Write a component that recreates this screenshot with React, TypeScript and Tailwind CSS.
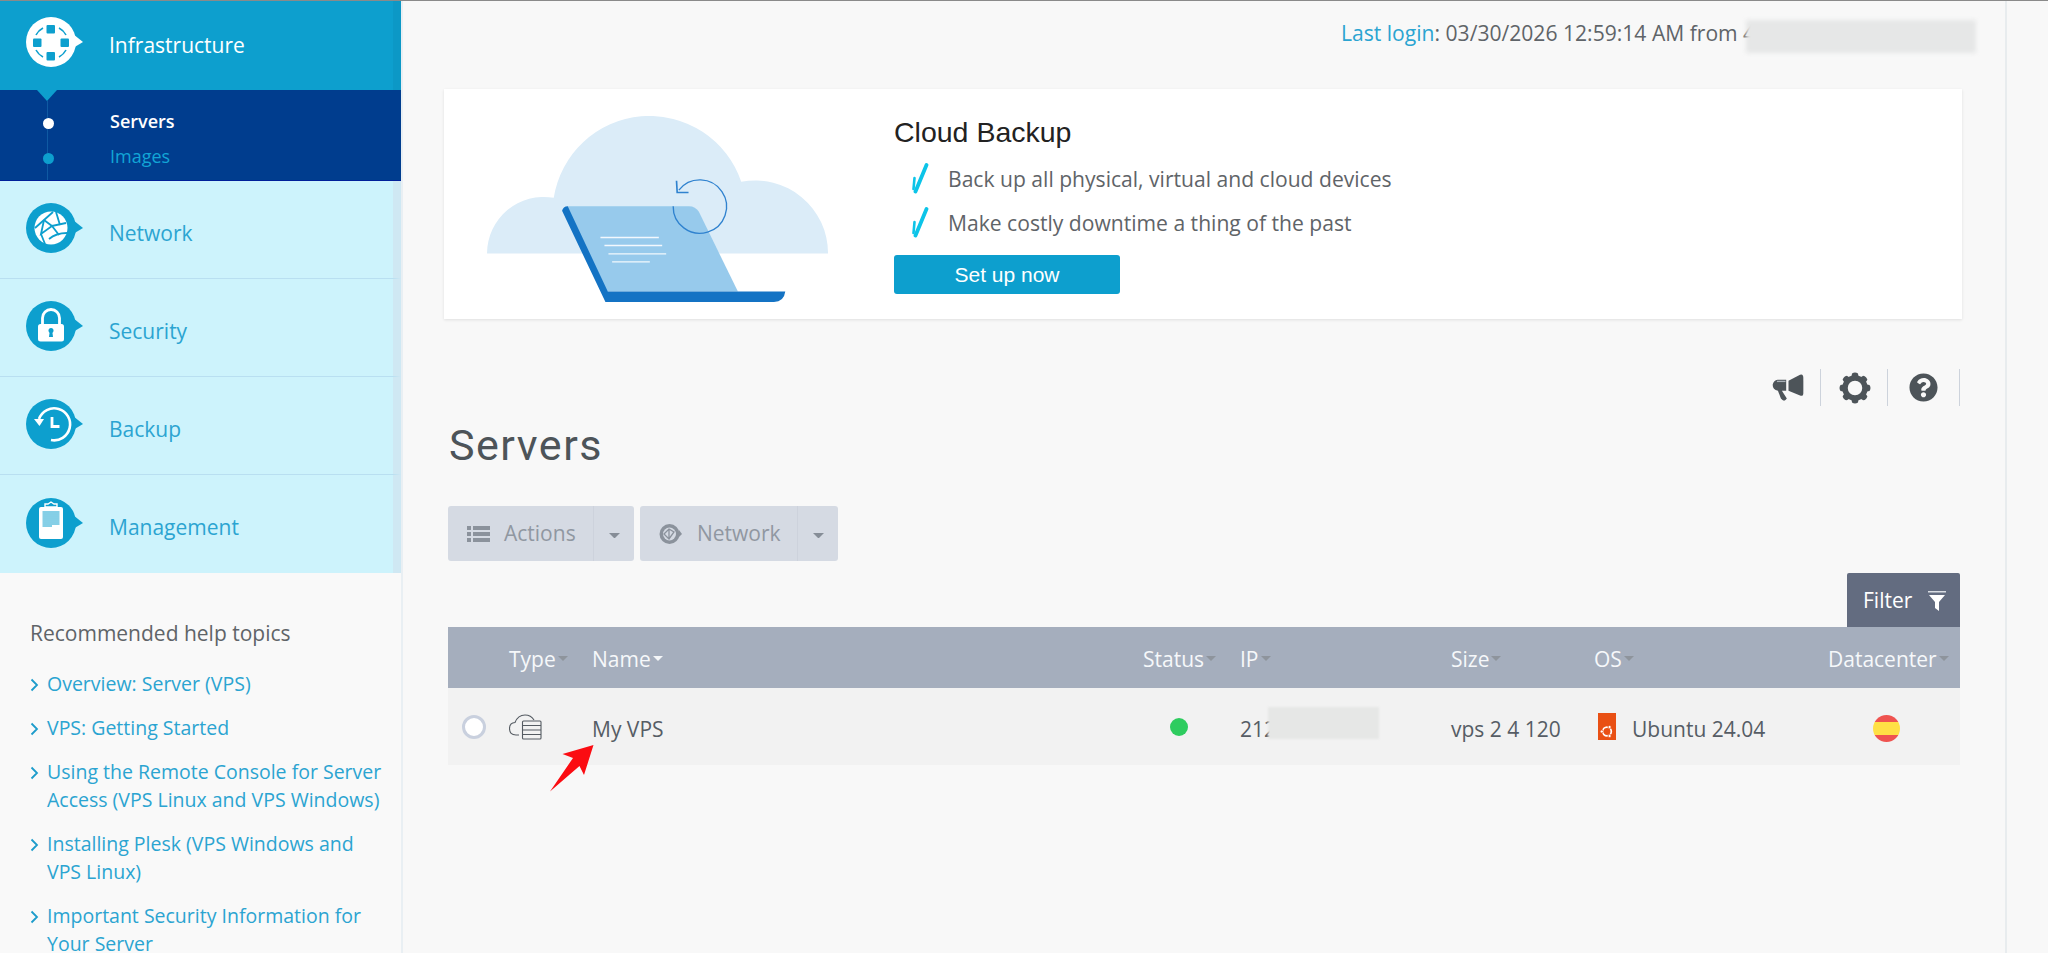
import { FaQuestionCircle } from 'react-icons/fa'

const NAV_BG = '#0d9fce'

function MenuIcon({ light, children }: { light?: boolean; children: React.ReactNode }) {
  const bg = light ? '#ffffff' : NAV_BG
  return (
    <svg width="58" height="50" viewBox="0 0 58 50" className="shrink-0">
      <circle cx="25" cy="25" r="25" fill={bg} />
      <path d="M47 17 L57 25 L47 31 Z" fill={bg} />
      {children}
    </svg>
  )
}

function InfraGlyph() {
  return (
    <g>
      <g fill={NAV_BG}>
        <rect x="20.5" y="8" width="8.5" height="8.5" rx="1" />
        <rect x="20.5" y="35" width="8.5" height="8.5" rx="1" />
        <rect x="7" y="21.5" width="8.5" height="8.5" rx="1" />
        <rect x="34.5" y="21.5" width="8.5" height="8.5" rx="1" />
      </g>
      <g fill="none" stroke={NAV_BG} strokeWidth="1.6">
        <path d="M10 18 A16.5 16.5 0 0 1 17 11" />
        <path d="M33 11 A16.5 16.5 0 0 1 40 18" />
        <path d="M40 33 A16.5 16.5 0 0 1 33 40" />
        <path d="M17 40 A16.5 16.5 0 0 1 10 33" />
      </g>
    </g>
  )
}

function GlobeGlyph() {
  return (
    <g>
      <circle cx="25" cy="25" r="16.5" fill="#fff" />
      <g fill="none" stroke={NAV_BG} strokeWidth="1.8">
        <path d="M9 25 L18 17 L27 9" />
        <path d="M18 17 L26 23 L40 20" />
        <path d="M18 17 L15 31 L26 23 L33 32" />
        <path d="M15 31 L19 41" />
        <path d="M23 36 Q30 30 41 30" />
        <path d="M30 9 L34 22" />
      </g>
    </g>
  )
}

function LockGlyph() {
  return (
    <g>
      <path d="M16.500 23 V17 A8.500 8.500 0 0 1 33.500 17 V23" fill="none" stroke="#fff" strokeWidth="2.800" />
      <rect x="12" y="23" width="26" height="17.500" rx="2.500" fill="#fff" />
      <circle cx="25" cy="29.500" r="2.500" fill={NAV_BG} />
      <path d="M23.800 30 H26.200 L27 36 H23 Z" fill={NAV_BG} />
    </g>
  )
}

function HistoryGlyph() {
  return (
    <g>
      <path d="M13 20 A16 16 0 1 1 25 41" fill="none" stroke="#fff" strokeWidth="2.600" />
      <path d="M8 20 L18 20 L13.500 27 Z" fill="#fff" />
      <path d="M26 18 V27.500 H33.500" fill="none" stroke="#fff" strokeWidth="2.800" />
    </g>
  )
}

function ClipboardGlyph() {
  return (
    <g>
      <rect x="13" y="9" width="24" height="32" rx="2" fill="#fff" />
      <path d="M19 6 H22 L25 4 L28 6 H31 V9 H19 Z" fill="none" stroke="#fff" strokeWidth="1.400" />
      <g stroke={NAV_BG} strokeWidth="1">
        <path d="M16.500 14 H33.500" /><path d="M16.500 16 H33.500" /><path d="M16.500 18 H33.500" />
        <path d="M16.500 20 H33.500" /><path d="M16.500 22 H33.500" /><path d="M16.500 24 H33.500" />
        <path d="M16.500 26 H33.500" /><path d="M16.500 28 H26" />
      </g>
    </g>
  )
}

const MENU = [
  { label: 'Network', glyph: <GlobeGlyph />, last: false },
  { label: 'Security', glyph: <LockGlyph />, last: false },
  { label: 'Backup', glyph: <HistoryGlyph />, last: false },
  { label: 'Management', glyph: <ClipboardGlyph />, last: true },
]

const HELP = [
  ['Overview: Server (VPS)'],
  ['VPS: Getting Started'],
  ['Using the Remote Console for Server', 'Access (VPS Linux and VPS Windows)'],
  ['Installing Plesk (VPS Windows and', 'VPS Linux)'],
  ['Important Security Information for', 'Your Server'],
]

function Sidebar() {
  return (
    <aside className="w-[403px] shrink-0 h-full border-r-2 border-[#e9eff3] bg-[#f9f9f9] overflow-hidden">
      <div className="h-[89px] bg-[#0d9fce] border-r-[8px] border-[#0c98c6] flex items-center pl-[26px] text-white">
        <div className="-mt-[8px]">
          <MenuIcon light><InfraGlyph /></MenuIcon>
        </div>
        <span className="ml-[25px] text-[21px] mt-[1px]">Infrastructure</span>
      </div>
      <div className="relative h-[91px] bg-[#003d8e] border-b border-[#00209a] pl-[110px] pt-[16px]">
        <svg width="20" height="11" viewBox="0 0 20 11" className="absolute left-[37px] top-0">
          <path d="M0 0 H20 L10 11 Z" fill="#0d9fce" />
        </svg>
        <div className="absolute left-[46.5px] top-[11px] bottom-0 w-px bg-[#0f5aa3]" />
        <div className="absolute left-[42.5px] top-[27.5px] w-[11px] h-[11px] rounded-full bg-white" />
        <div className="absolute left-[42.5px] top-[62.5px] w-[11px] h-[11px] rounded-full bg-[#0d9fce]" />
        <div className="text-[18px] leading-[30px] font-semibold text-white">Servers</div>
        <div className="text-[18px] leading-[30px] mt-[5px] text-[#12a5d6]">Images</div>
      </div>
      {MENU.map(m => (
        <div key={m.label} className={`h-[98px] ${m.last ? '' : 'border-b-[1px] border-[#b9dff1]'} bg-[#cdf3fc] border-r-[8px] border-r-[#cfe8f3] flex items-center pl-[26px]`}>
          <div className="-mt-[3px]"><MenuIcon>{m.glyph}</MenuIcon></div>
          <span className="ml-[25px] text-[21px] text-[#2ba4d1] mt-[8px]">{m.label}</span>
        </div>
      ))}
      <div className="pl-[30px] pt-[45px]">
        <h3 className="text-[21px] leading-[30px] text-[#5f6468]">Recommended help topics</h3>
        <ul className="mt-[22px] text-[19.500px] leading-[28px] text-[#2ba4d1]">
          {HELP.map(lines => (
            <li key={lines[0]} className="flex mb-[16px]">
              <svg width="9" height="14" viewBox="0 0 9 14" className="shrink-0 mt-[8px] mr-[8px]">
                <path d="M1.500 1.500 L7 7 L1.500 12.500" fill="none" stroke="#1d9ccb" strokeWidth="1.800" />
              </svg>
              <div className="whitespace-nowrap">
                {lines.map(l => <div key={l}>{l}</div>)}
              </div>
            </li>
          ))}
        </ul>
      </div>
    </aside>
  )
}

function BannerArt() {
  return (
    <svg width="341" height="186" viewBox="170 108 1022 557" className="shrink-0">
      <path d="M170 520 A170 170 0 0 1 370 353 A290.400 290.400 0 0 1 932 305 A218 218 0 0 1 1192 520 Z" fill="#dbecf8" />
      <path d="M410 378 H775 Q795 378 805 395 L922 634 H530 Z" fill="#97caec" />
      <path d="M395 392 Q398 378 412 378 L532 634 H1064 Q1060 665 1030 665 H525 Z" fill="#1473c4" />
      <path d="M745 330 A80 80 0 1 1 728 378" fill="none" stroke="#2f82cf" strokeWidth="4" />
      <path d="M738 302 L740 337 L774 337" fill="none" stroke="#2f82cf" strokeWidth="5" />
      <g stroke="#f2f8fd" strokeWidth="4">
        <path d="M510 472 H685" /><path d="M522 496 H695" /><path d="M534 521 H707" /><path d="M545 545 H658" />
      </g>
    </svg>
  )
}

function Tick() {
  return (
    <svg width="18" height="31" viewBox="0 0 18 31" className="shrink-0">
      <path d="M15.500 2 L4.500 28.500" stroke="#0cc4e8" strokeWidth="3.800" strokeLinecap="round" />
      <path d="M3.500 15 L2.500 26" stroke="#0cc4e8" strokeWidth="2.600" strokeLinecap="round" />
    </svg>
  )
}

function Banner() {
  return (
    <div className="h-[230px] bg-white shadow-[0_1px_3px_rgba(0,0,0,0.1)] flex pl-[43px] pt-[27px]">
      <BannerArt />
      <div className="ml-[66px] -mt-[3px]">
        <h2 className="font-['Liberation_Sans',sans-serif] text-[28.500px] leading-[32px] mt-[3px] text-[#222]">Cloud Backup</h2>
        <div className="mt-[15px] pl-[17px] text-[#5f6468] text-[21.100px]">
          <div className="flex items-center gap-[19px] h-[31px]"><Tick /><span>Back up all physical, virtual and cloud devices</span></div>
          <div className="flex items-center gap-[19px] h-[31px] mt-[13px]"><Tick /><span>Make costly downtime a thing of the past</span></div>
        </div>
        <button className="mt-[17px] w-[226px] h-[39px] rounded-[3px] bg-[#0d9fce] text-white font-['Liberation_Sans',sans-serif] text-[21px]">Set up now</button>
      </div>
    </div>
  )
}

function Megaphone() {
  return (
    <svg width="32" height="30" viewBox="95 75 97 90">
      <path d="M97 110 Q100 97 112 95 L138 95 V128 L125 128 L140 152 Q132 165 122 152 L113 128 Q97 125 97 110 Z" fill="#4d5459" />
      <path d="M145 98 L180 80 Q190 76 190 90 V135 Q190 146 180 143 L145 128 Z" fill="#4d5459" />
      <path d="M110 100 H136" stroke="#aab1b8" strokeWidth="4" />
    </svg>
  )
}

function Gear() {
  const angles = [0, 45, 90, 135, 180, 225, 270, 315]
  return (
    <svg width="32" height="32" viewBox="0 0 32 32">
      {angles.map(a => (
        <path key={a} d="M13 1.500 Q16 -0.500 19 1.500 L20 7 H12 Z" fill="#4d5459" transform={`rotate(${a} 16 16)`} />
      ))}
      <circle cx="16" cy="16" r="10" fill="none" stroke="#4d5459" strokeWidth="5.500" />
    </svg>
  )
}

function Caret({ color = '#8e949c', w = 10 }: { color?: string; w?: number }) {
  return (
    <svg width={w} height={w / 2} viewBox="0 0 10 5" className="shrink-0">
      <path d="M0 0 H10 L5 5 Z" fill={color} />
    </svg>
  )
}

function ToolBar() {
  return (
    <div className="flex justify-end items-center h-[37px] mt-[50px] mr-[2px]">
      <div className="pr-[16px] border-r border-[#cdd3dc] h-full flex items-center"><Megaphone /></div>
      <div className="pl-[18px] pr-[16px] border-r border-[#cdd3dc] h-full flex items-center"><Gear /></div>
      <div className="pl-[21px] pr-[21px] border-r border-[#cdd3dc] h-full flex items-center"><FaQuestionCircle size={29} color="#4d5459" /></div>
    </div>
  )
}

function SplitButton({ icon, label, w, textGap }: { icon: React.ReactNode; label: string; w: string; textGap: string }) {
  return (
    <div className="flex h-[55px] rounded-[3px] bg-[#d5dae3] text-[21px] text-[#9097a1]">
      <div className={`${w} flex items-center border-r border-[#cdd2dc] pl-[19px] ${textGap}`}>
        {icon}
        <span>{label}</span>
      </div>
      <div className="w-[40px] flex items-center justify-center pt-[4px]"><Caret color="#868d97" w={11} /></div>
    </div>
  )
}

function ListIcon() {
  return (
    <svg width="23" height="18" viewBox="0 0 23 18">
      <g fill="#8b929c">
        <rect x="0" y="1" width="4" height="4" /><rect x="6" y="1" width="17" height="4" />
        <rect x="0" y="7" width="4" height="4" /><rect x="6" y="7" width="17" height="4" />
        <rect x="0" y="13" width="4" height="4" /><rect x="6" y="13" width="17" height="4" />
      </g>
    </svg>
  )
}

function NetIcon() {
  return (
    <svg width="23" height="22" viewBox="0 0 23 22">
      <circle cx="10.500" cy="11" r="10" fill="#8b929c" />
      <path d="M20 7 L23 11 L20 14 Z" fill="#8b929c" />
      <circle cx="10.500" cy="11" r="6.500" fill="#d5dae3" />
      <path d="M5 11 L10 6 L15 9 L10 16 Z M10 6 L10 16" fill="none" stroke="#8b929c" strokeWidth="1.300" />
    </svg>
  )
}

function TypeIcon() {
  return (
    <svg width="33" height="26" viewBox="0 0 33 26" fill="none" stroke="#555b62" strokeWidth="1.100">
      <path d="M10 21 H7 Q0.500 21 0.500 14.500 Q0.500 9 6 8.500 Q9 1 16 1 Q22 1 25 6" />
      <rect x="13.500" y="7" width="18.500" height="18" rx="1" fill="#f2f2f2" />
      <path d="M13.500 11.500 H32 M13.500 16 H32 M13.500 20.500 H32" />
    </svg>
  )
}

function UbuntuIcon() {
  return (
    <svg width="18" height="27" viewBox="0 0 18 27">
      <rect width="18" height="27" fill="#e95014" />
      <circle cx="9" cy="18.500" r="4.300" fill="none" stroke="#fff" strokeWidth="1.700" />
      <g fill="#fff" stroke="#e95014" strokeWidth="0.800">
        <circle cx="3.800" cy="18.500" r="1.600" />
        <circle cx="11.600" cy="14" r="1.600" />
        <circle cx="11.600" cy="23" r="1.600" />
      </g>
    </svg>
  )
}

function Flag() {
  return (
    <div className="w-[27px] h-[27px] rounded-full overflow-hidden flex flex-col">
      <div className="h-[7px] bg-[#ef5350]" />
      <div className="flex-1 bg-[#ffe045]" />
      <div className="h-[7px] bg-[#ef5350]" />
    </div>
  )
}

function HeadCell({ label, active }: { label: string; active?: boolean }) {
  return (
    <div className="flex items-center gap-[2px] pt-[5px]">
      <span>{label}</span>
      <span className="pb-[3px]"><Caret color={active ? '#f4f6f8' : '#8e949c'} /></span>
    </div>
  )
}

const COLS = 'grid grid-cols-[61px_83px_551px_97px_211px_143px_234px_132px] items-center'

function ServerTable() {
  return (
    <div className="ml-[4px] mr-[2px] relative">
      <div className="flex justify-end">
        <button className="w-[113px] h-[54px] rounded-t-[2px] bg-[#636c80] text-white text-[21px] flex items-center pl-[16px] gap-[16px] pt-[2px]">
          <span>Filter</span>
          <svg width="18" height="20" viewBox="0 0 18 20">
            <path d="M0 0 H18 V1.500 H0 Z" fill="#d9dde3" />
            <path d="M1 4 H17 L11 11 V20 L7 17 V11 Z" fill="#fff" />
          </svg>
        </button>
      </div>
      <div className={`${COLS} h-[61px] bg-[#a5aebd] text-[#f6f8fa] text-[21px]`}>
        <div />
        <HeadCell label="Type" />
        <HeadCell label="Name" active />
        <HeadCell label="Status" />
        <HeadCell label="IP" />
        <HeadCell label="Size" />
        <HeadCell label="OS" />
        <HeadCell label="Datacenter" />
      </div>
      <div className={`${COLS} h-[77px] bg-[#f2f2f2] text-[#565d65] text-[21px]`}>
        <div className="pl-[14px]">
          <div className="w-[24px] h-[24px] rounded-full bg-white border-[3px] border-[#c9d0de]" />
        </div>
        <TypeIcon />
        <div className="pt-[6px]">My VPS</div>
        <div className="pl-[27px]"><div className="w-[18px] h-[18px] rounded-full bg-[#2ecc5f]" /></div>
        <div className="relative pt-[7px]">
          <span>212</span>
          <div className="absolute left-[28px] top-0 w-[111px] h-[32px] bg-[#e6e7e6] blur-[1px]" />
        </div>
        <div className="pt-[7px]">vps 2 4 120</div>
        <div className="flex items-center gap-[16px] pl-[4px]"><UbuntuIcon /><span className="pt-[7px]">Ubuntu 24.04</span></div>
        <div className="pl-[45px] mt-[3px]"><Flag /></div>
      </div>
      {/* annotation arrow from the original screenshot */}
      <svg width="45" height="47" viewBox="0 0 45 47" className="absolute left-[102px] top-[172px]">
        <path d="M43.500 0 L34 30 L29.500 21 L0 46.500 L23 13 L12.500 9 Z" fill="#fb0c12" />
      </svg>
    </div>
  )
}

export default function App() {
  return (
    <div className="w-[2048px] h-[953px] overflow-hidden flex border-t border-[#8a8a8a] bg-[#f8f8f8] font-['Open_Sans',sans-serif]">
      <Sidebar />
      <main className="w-[1602px] shrink-0 pl-[41px] pr-[43px]">
        <div className="h-[88px] relative text-[21.100px] text-[#5f6468] pl-[897px] pt-[17px] whitespace-nowrap leading-[30px]">
          <span className="text-[#2ba4d1]">Last login</span>: 03/30/2026 12:59:14 AM from 4
          <div className="absolute left-[1302px] top-[19px] w-[230px] h-[33px] bg-[#e6e7e7] blur-[2px]" />
        </div>
        <Banner />
        <ToolBar />
        <h1 className="ml-[5px] mt-[11px] text-[43px] leading-[56px] tracking-[1.500px] text-[#4d5459] font-['Roboto',sans-serif]">Servers</h1>
        <div className="ml-[4px] mt-[33px] flex gap-[6px]">
          <SplitButton icon={<ListIcon />} label="Actions" w="w-[146px]" textGap="gap-[14px]" />
          <SplitButton icon={<NetIcon />} label="Network" w="w-[158px]" textGap="gap-[15px]" />
        </div>
        <div className="mt-[12px]"><ServerTable /></div>
      </main>
      <div className="flex-1 border-l-2 border-[#e8ecee]" />
    </div>
  )
}
